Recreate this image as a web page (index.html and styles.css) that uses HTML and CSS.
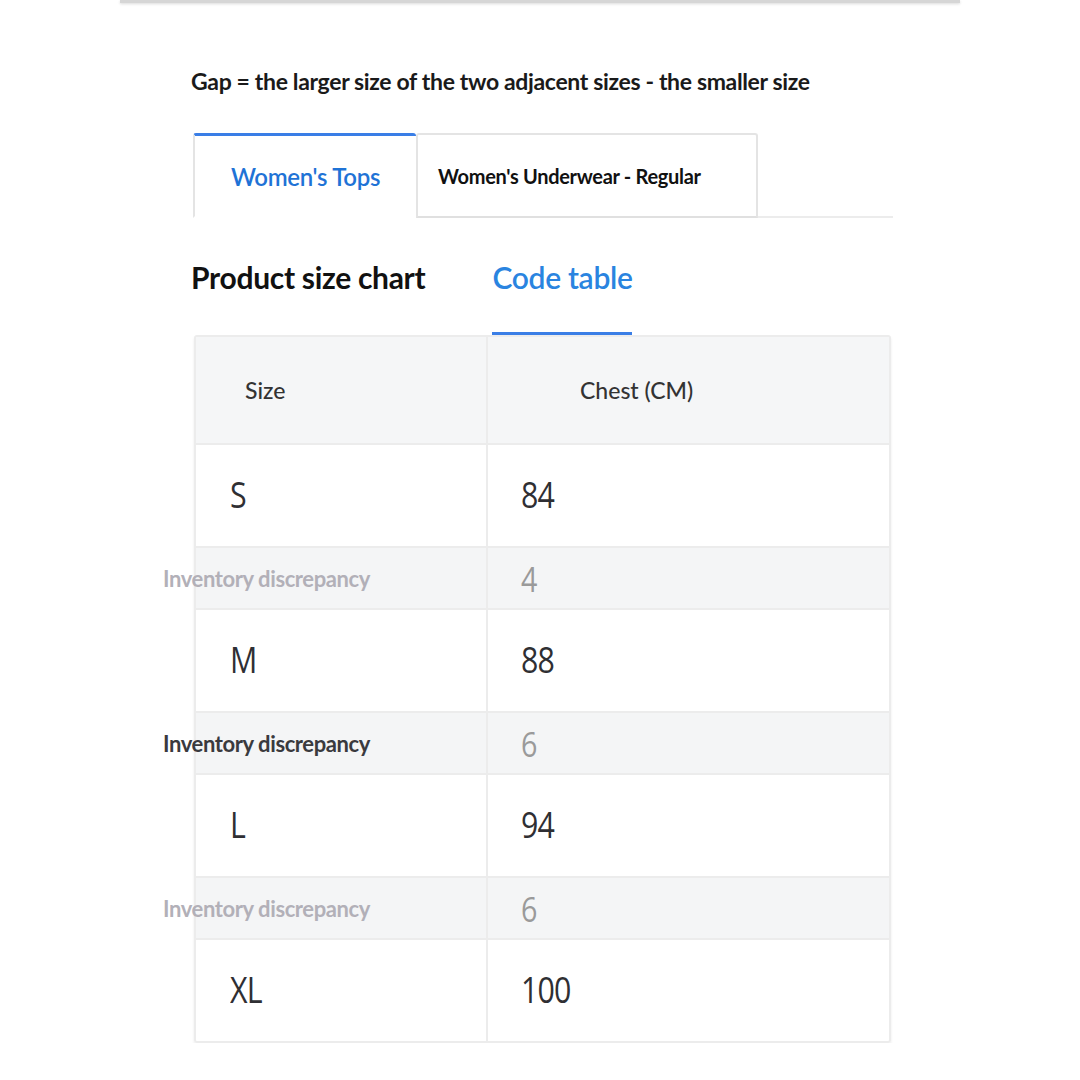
FILE: index.html
```html
<!DOCTYPE html>
<html>
<head>
<meta charset="utf-8">
<link rel="stylesheet" href="styles.css">
</head>
<body>
<div class="topbar"></div>
<main class="page">
  <h1 class="formula">Gap = the larger size of the two adjacent sizes - the smaller size</h1>
  <div class="tabs">
    <div class="tab active">Women's Tops</div>
    <div class="tab">Women's Underwear - Regular</div>
    <div class="tab-rest"></div>
  </div>
  <div class="subtabs">
    <div class="subtab">Product size chart</div>
    <div class="subtab current">Code table</div>
  </div>
  <div class="table">
    <div class="row head"><div class="c1">Size</div><div class="c2">Chest (CM)</div></div>
    <div class="row size"><div class="c1"><span class="num">S</span></div><div class="c2"><span class="num">84</span></div></div>
    <div class="row gap"><div class="c1"><span class="lbl light">Inventory discrepancy</span></div><div class="c2"><span class="num">4</span></div></div>
    <div class="row size"><div class="c1"><span class="num">M</span></div><div class="c2"><span class="num">88</span></div></div>
    <div class="row gap"><div class="c1"><span class="lbl dark">Inventory discrepancy</span></div><div class="c2"><span class="num">6</span></div></div>
    <div class="row size"><div class="c1"><span class="num">L</span></div><div class="c2"><span class="num">94</span></div></div>
    <div class="row gap"><div class="c1"><span class="lbl light">Inventory discrepancy</span></div><div class="c2"><span class="num">6</span></div></div>
    <div class="row size last"><div class="c1"><span class="num">XL</span></div><div class="c2"><span class="num">100</span></div></div>
  </div>
</main>
</body>
</html>
```
FILE: styles.css
```css
html, body {
  margin: 0;
  padding: 0;
  background: #ffffff;
  font-family: Lato, "Open Sans", sans-serif;
}
.topbar {
  margin: 0 120px;
  height: 3px;
  background: #d6d6d6;
  box-shadow: 0 1px 3px rgba(0,0,0,0.15);
}
.page {
  margin-left: 191px;
  width: 702px;
  padding-top: 63px;
}
.formula {
  margin: 0;
  font-size: 23px;
  font-weight: 700;
  color: #1a1a1a;
  letter-spacing: -0.35px;
  line-height: 30px;
  white-space: nowrap;
}
.tabs {
  display: flex;
  margin-top: 37px;
  margin-left: 2px;
  height: 85px;
}
.tab {
  display: flex;
  align-items: center;
  box-sizing: border-box;
  border: 2px solid #e4e4e4;
  border-bottom: 2px solid #e0e0e0;
  border-radius: 3px 3px 0 0;
  background: #fff;
  font-weight: 700;
  color: #111;
  font-size: 20px;
  letter-spacing: -0.3px;
}
.tab.active {
  width: 223px;
  border-top: 3px solid #3a7ee6;
  border-bottom-color: transparent;
  border-right: none;
  justify-content: center;
  color: #1f73d6;
  font-size: 24px;
  font-weight: 600;
  padding-top: 0;
}
.tab:not(.active) {
  width: 342px;
  padding-left: 20px;
  padding-top: 0;
  border-top-width: 2px;
}
.tab-rest {
  flex: 1;
  border-bottom: 2px solid #ececec;
}
.subtabs {
  display: flex;
  margin-top: 28px;
  height: 89px;
}
.subtab {
  font-size: 30px;
  font-weight: 700;
  color: #111;
  letter-spacing: -0.3px;
  line-height: 62px;
  height: 89px;
  box-sizing: border-box;
}
.subtab.current {
  margin-left: 67px;
  color: #2a84e0;
  font-weight: 600;
  border-bottom: 3px solid #3a7ee6;
  width: 140px;
  white-space: nowrap;
}
.table {
  margin-top: 0;
  margin-left: 3px;
  width: 693px;
  border: 2px solid #ececec;
  border-radius: 3px;
  box-shadow: 0 2px 3px rgba(0,0,0,0.08);
}
.row {
  display: flex;
  border-bottom: 2px solid #ececec;
  align-items: stretch;
}
.row.last { border-bottom: none; }
.c1 {
  width: 292px;
  border-right: 2px solid #ececec;
  display: flex;
  align-items: center;
  box-sizing: border-box;
  position: relative;
}
.c2 {
  flex: 1;
  display: flex;
  align-items: center;
}
.row.head {
  height: 106px;
  background: #f5f6f7;
  font-size: 23px;
  color: #333;
  font-weight: 500;
}
.row.head .c1 { padding-left: 49px; }
.row.head .c2 { padding-left: 92px; }
.num {
  display: inline-block;
  font-family: "Open Sans", sans-serif;
  transform: scaleX(0.82);
  transform-origin: left center;
  letter-spacing: -1px;
}
.row.size {
  height: 101px;
  font-size: 37px;
  color: #2f2f33;
}
.row.size .c1,
.row.size .c2 { padding-bottom: 4px; box-sizing: border-box; }
.row.size .c1 { padding-left: 34px; }
.row.size .c2 { padding-left: 33px; }
.row.gap {
  height: 60px;
  background: #f4f5f6;
  font-size: 35px;
  color: #9a9a9a;
}
.row.gap .c2 { padding-left: 33px; }
.lbl {
  position: absolute;
  left: -33px;
  font-family: Lato, sans-serif;
  font-size: 22px;
  letter-spacing: -0.4px;
  font-weight: 700;
  white-space: nowrap;
}
.lbl.light { color: #b2b0b8; }
.lbl.dark { color: #3a3a3e; }
```
